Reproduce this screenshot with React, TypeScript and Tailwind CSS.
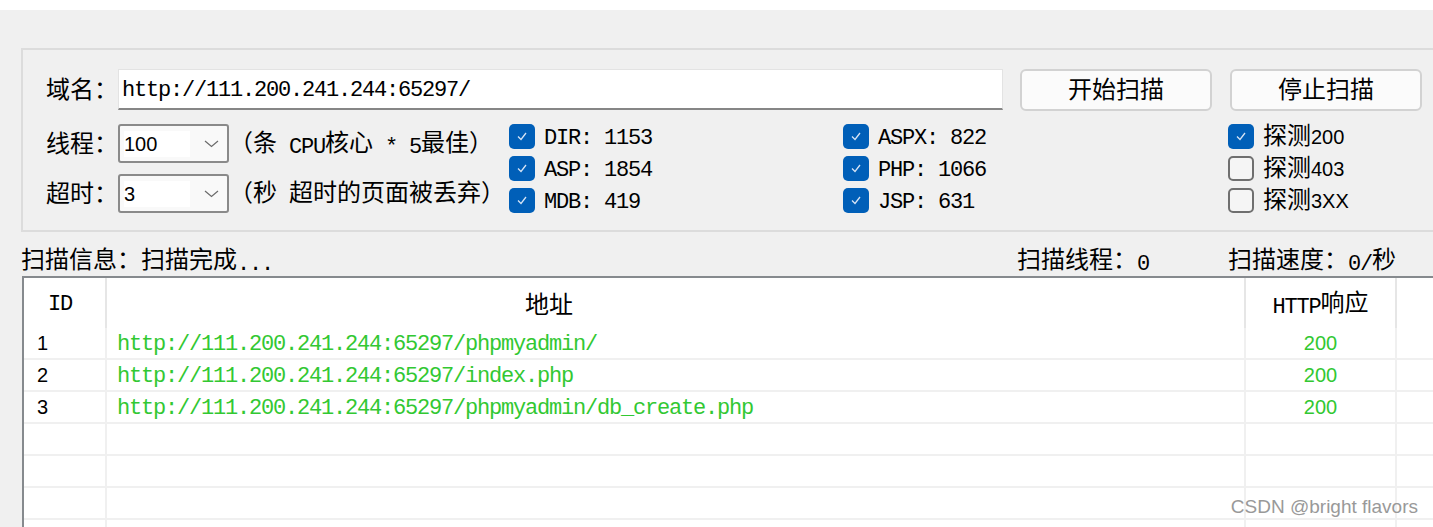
import React from "react";

// fonts: SimSun-like look, Latin half-width, CJK full-width
const CJK = "font-['Noto_Sans_CJK_SC',sans-serif] text-[24px]";
const MONO = "relative top-[2px] font-['Liberation_Mono',monospace] text-[22px] tracking-[-1.2px] whitespace-pre";
const SANS = "font-['Liberation_Sans',sans-serif] text-[20px] whitespace-pre";

const Mix = ({ s, sans }: { s: string; sans?: boolean }) => {
	const parts = s.split(/([\u3000-\u303f\u4e00-\u9fff\uff00-\uffef]+)/);
	return (
		<>
			{parts.map((p, i) =>
				p === "" ? null : i % 2 === 1 ? (
					<span key={i} className={CJK}>
						{p}
					</span>
				) : (
					<span key={i} className={sans ? SANS : MONO}>
						{p}
					</span>
				)
			)}
		</>
	);
};

const Check = ({ on }: { on: boolean }) =>
	on ? (
		<div className="flex h-[25px] w-[26px] shrink-0 items-center justify-center rounded-[5px] bg-[#005fb8]">
			<svg width="14" height="14" viewBox="0 0 14 14">
				<polyline points="3,7.5 6,10.5 11,4" fill="none" stroke="#d6e4f5" strokeWidth="1.3" />
			</svg>
		</div>
	) : (
		<div className="h-[25px] w-[26px] shrink-0 rounded-[5px] border-2 border-[#6f6f6f] bg-[#f5f5f5]" />
	);

const Select = ({ value }: { value: string }) => (
	<div className="flex h-[39px] w-[111px] shrink-0 items-center rounded-[3px] border-2 border-[#8a8a8a] bg-[#f9f9f9] pl-[4px]">
		<div className="flex h-[26px] w-[66px] items-center bg-white leading-[20px]">
			<span className={SANS}>{value}</span>
		</div>
		<svg className="ml-auto mr-[8px]" width="15" height="8" viewBox="0 0 15 8">
			<polyline points="1,1 7.5,6.5 14,1" fill="none" stroke="#6b6b6b" strokeWidth="1.2" />
		</svg>
	</div>
);

const Box = ({ label }: { label: string }) => (
	<div className="flex h-[32px] items-center gap-[9px] leading-[24px]">
		<Check on />
		<div>
			<Mix s={label} />
		</div>
	</div>
);

const results = [
	"http://111.200.241.244:65297/phpmyadmin/",
	"http://111.200.241.244:65297/index.php",
	"http://111.200.241.244:65297/phpmyadmin/db_create.php",
];

const App = () => {
	const rows = [...results, "", "", "", ""];
	return (
		<div className="relative h-[527px] w-[1433px] overflow-hidden whitespace-nowrap bg-[#f0f0f0] text-black">
			<div className="h-[10px] bg-white" />

			{/* settings group */}
			<div className="ml-[21px] mt-[38px] h-[184px] w-[1440px] border-2 border-[#dcdcdc] pt-[18px]">
				<div className="flex h-[43px] items-center pl-[23px]">
					<div className="w-[72px] shrink-0 leading-[24px]">
						<Mix s="域名：" />
					</div>
					<div className="flex h-[41px] w-[885px] shrink-0 items-center border border-b-2 border-[#e3e3e3] border-b-[#868686] bg-white pl-[3px] leading-[24px]">
						<span className={MONO}>http://111.200.241.244:65297/</span>
					</div>
					<button className="ml-[17px] h-[42px] w-[192px] shrink-0 rounded-[6px] border-2 border-[#d2d2d2] bg-[#fbfbfb] leading-[24px]">
						<Mix s="开始扫描" />
					</button>
					<button className="ml-[18px] h-[42px] w-[192px] shrink-0 rounded-[6px] border-2 border-[#d2d2d2] bg-[#fbfbfb] leading-[24px]">
						<Mix s="停止扫描" />
					</button>
				</div>

				<div className="mt-[9px] flex">
					<div className="flex w-[486px] shrink-0 flex-col gap-[11px] pl-[23px] pt-[4px]">
						<div className="flex h-[39px] items-center leading-[24px]">
							<div className="w-[72px] shrink-0">
								<Mix s="线程：" />
							</div>
							<Select value="100" />
							<div className="shrink-0">
								<Mix s="（条 CPU核心 * 5最佳）" />
							</div>
						</div>
						<div className="flex h-[39px] items-center leading-[24px]">
							<div className="w-[72px] shrink-0">
								<Mix s="超时：" />
							</div>
							<Select value="3" />
							<div className="shrink-0">
								<Mix s="（秒 超时的页面被丢弃）" />
							</div>
						</div>
					</div>
					<div className="flex w-[334px] shrink-0 flex-col">
						<Box label="DIR: 1153" />
						<Box label="ASP: 1854" />
						<Box label="MDB: 419" />
					</div>
					<div className="flex w-[385px] shrink-0 flex-col">
						<Box label="ASPX: 822" />
						<Box label="PHP: 1066" />
						<Box label="JSP: 631" />
					</div>
					<div className="flex flex-col">
						{[
							{ t: "探测200", on: true },
							{ t: "探测403", on: false },
							{ t: "探测3XX", on: false },
						].map((c) => (
							<div key={c.t} className="flex h-[32px] items-center gap-[9px] leading-[24px]">
								<Check on={c.on} />
								<div>
									<Mix s={c.t} sans />
								</div>
							</div>
						))}
					</div>
				</div>
			</div>

			{/* status */}
			<div className="flex h-[44px] pt-[14px] leading-[24px]">
				<div className="ml-[21px] w-[996px] shrink-0">
					<Mix s="扫描信息：扫描完成..." />
				</div>
				<div className="w-[211px] shrink-0">
					<Mix s="扫描线程：0" />
				</div>
				<div>
					<Mix s="扫描速度：0/秒" />
				</div>
			</div>

			{/* results table */}
			<div className="ml-[22px] h-[260px] w-[1420px] border-l-2 border-t-2 border-[#868a8e] bg-white">
				<div className="flex h-[50px] leading-[24px]">
					<div className="flex w-[83px] shrink-0 items-center border-r-2 border-[#e6e6e6] pl-[24px]">
						<Mix s="ID" />
					</div>
					<div className="flex w-[1139px] shrink-0 items-center border-r-2 border-[#e6e6e6] pl-[418px]">
						<Mix s="地址" />
					</div>
					<div className="flex w-[151px] shrink-0 items-center justify-center border-r-2 border-[#e6e6e6]">
						<div>
							<Mix s="HTTP响应" />
						</div>
					</div>
					<div className="flex-1" />
				</div>
				{rows.map((url, i) => (
					<div key={i} className="flex h-[32px] border-b-2 border-[#f0f0f0] leading-[24px]">
						<div className="flex w-[83px] shrink-0 items-center border-r-2 border-[#f0f0f0] pl-[13px]">
							{url && <span className={SANS}>{i + 1}</span>}
						</div>
						<div className="flex w-[1139px] shrink-0 items-center border-r-2 border-[#f0f0f0] pl-[10px] text-[#32c832]">
							{url && <span className={MONO}>{url}</span>}
						</div>
						<div className="flex w-[151px] shrink-0 items-center justify-center border-r-2 border-[#f0f0f0] text-[#32c832]">
							{url && <span className={SANS}>200</span>}
						</div>
						<div className="flex-1" />
					</div>
				))}
			</div>

			<div className="absolute bottom-[9px] right-[15px] font-['Liberation_Sans',sans-serif] text-[19px] leading-[22px] text-[#999999]">
				CSDN @bright flavors
			</div>
		</div>
	);
};

export default App;
